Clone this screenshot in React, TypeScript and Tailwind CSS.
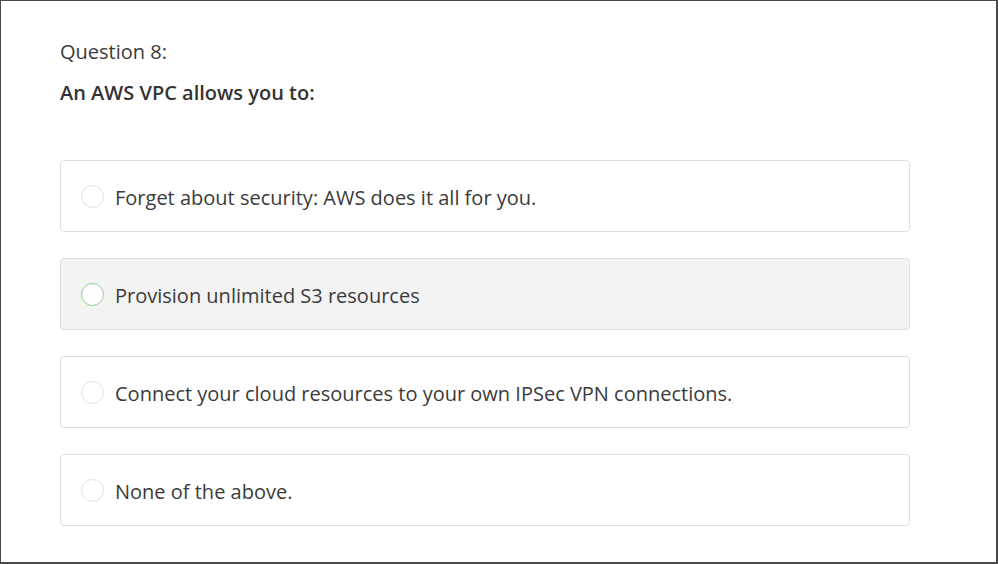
const options = [
  "Forget about security: AWS does it all for you.",
  "Provision unlimited S3 resources",
  "Connect your cloud resources to your own IPSec VPN connections.",
  "None of the above.",
];

export default function App() {
  const hovered = 1;
  return (
    <div
      className="w-[998px] h-[564px] bg-white border-t border-l border-r-2 border-b-2 border-[#4a4a4a] text-[#3b3b3b] overflow-hidden"
      style={{ fontFamily: '"Open Sans", "Liberation Sans", sans-serif' }}
    >
      <div className="pl-[59px] pt-[37px] w-[909px]">
        <div className="text-[20px] leading-[28px]">Question 8:</div>
        <div className="mt-[13px] text-[20px] leading-[28px] font-semibold text-[#333]">
          An AWS VPC allows you to:
        </div>
        <div className="mt-[53px] flex flex-col gap-[26px]">
          {options.map((text, i) => (
            <div
              key={i}
              className={
                "h-[72px] rounded-[4px] border border-[#dedede] flex items-center pl-[20px] " +
                (i === hovered ? "bg-[#f3f3f3]" : "bg-white")
              }
            >
              <span
                className={
                  "w-[23px] h-[23px] rounded-full bg-white border " +
                  (i === hovered ? "border-[#8fd08f]" : "border-[#e2e2e2]")
                }
              />
              <span className="ml-[11px] pt-[3px] text-[20px] leading-[28px]">{text}</span>
            </div>
          ))}
        </div>
      </div>
    </div>
  );
}
